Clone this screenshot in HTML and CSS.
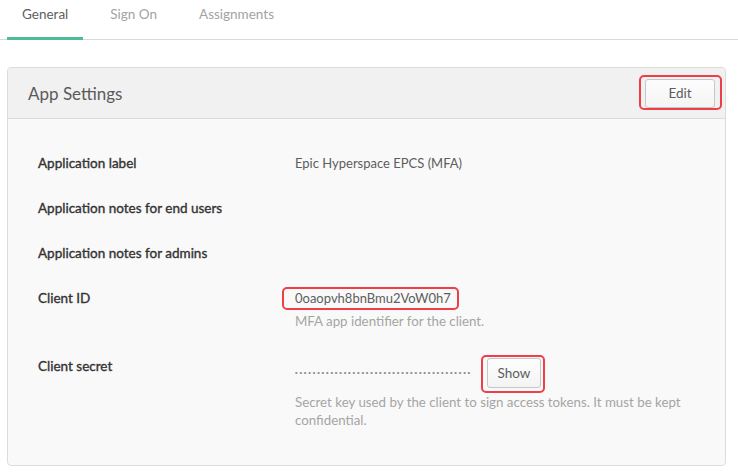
FILE: index.html
```html
<!DOCTYPE html>
<html>
<head>
<meta charset="utf-8">
<link rel="stylesheet" href="styles.css">
</head>
<body>
<nav class="tabs">
  <a class="tab active">General</a>
  <a class="tab">Sign On</a>
  <a class="tab">Assignments</a>
</nav>
<section class="panel">
  <header class="panel-head">
    <h2 class="panel-title">App Settings</h2>
    <button class="btn mark mark-edit">Edit</button>
  </header>
  <div class="panel-body">
    <div class="row">
      <div class="label">Application label</div>
      <div class="value">Epic Hyperspace EPCS (MFA)</div>
    </div>
    <div class="row">
      <div class="label">Application notes for end users</div>
      <div class="value"></div>
    </div>
    <div class="row">
      <div class="label">Application notes for admins</div>
      <div class="value"></div>
    </div>
    <div class="row">
      <div class="label">Client ID</div>
      <div class="value">
        <span class="mark mark-id">0oaopvh8bnBmu2VoW0h7</span>
        <p class="help">MFA app identifier for the client.</p>
      </div>
    </div>
    <div class="row">
      <div class="label">Client secret</div>
      <div class="value">
        <div class="secret-line">
          <span class="dots">••••••••••••••••••••••••••••••••••••••••</span>
          <button class="btn btn-show mark mark-show">Show</button>
        </div>
        <p class="help">Secret key used by the client to sign access tokens. It must be kept confidential.</p>
      </div>
    </div>
  </div>
</section>
</body>
</html>
```

FILE: styles.css
```css
* { box-sizing: border-box; }
body {
  margin: 0;
  background: #fff;
  font-family: Lato, "Liberation Sans", Arial, sans-serif;
  font-size: 14px;
  color: #5d5d5d;
}
.tabs {
  display: flex;
  gap: 12px;
  padding-left: 7px;
  border-bottom: 1px solid #d9d9d9;
  height: 40px;
}
.tab {
  padding: 6px 15px 0;
  height: 40px;
  color: #a3a3a3;
  font-size: 13.5px;
  border-bottom: 3px solid transparent;
}
.tab.active {
  color: #5e5e5e;
  border-bottom-color: #4cbb97;
  margin-bottom: -1px;
}
.panel {
  margin: 27px 12px 0 7px;
  border: 1px solid #dcdcdc;
  border-radius: 4px;
  background: #f9f9f9;
}
.panel-head {
  display: flex;
  align-items: center;
  justify-content: space-between;
  height: 51px;
  padding: 0 10px 0 20px;
  background: #f1f1f1;
  border-bottom: 1px solid #dcdcdc;
  border-radius: 4px 4px 0 0;
}
.panel-title {
  margin: 0;
  font-size: 17px;
  font-weight: normal;
  color: #5a5a5a;
}
.btn {
  font-family: inherit;
  font-size: 13.5px;
  color: #5d5d5d;
  background: linear-gradient(#fdfdfd, #f4f4f4);
  border: 1px solid #c6c6c6;
  border-radius: 3px;
  height: 29px;
  width: 70px;
  padding: 0;
}
.panel-body {
  padding: 35px 30px 36px 30px;
  display: flex;
  flex-direction: column;
  gap: 27px;
}
.row {
  display: grid;
  grid-template-columns: 257px 1fr;
  line-height: 18px;
}
.label {
  color: #333;
  font-size: 13.5px;
  -webkit-text-stroke: 0.35px #333;
}
.value {
  color: #5d5d5d;
  font-size: 13px;
  min-height: 18px;
}
.help {
  margin: 5px 0 0;
  color: #a5a5a5;
  font-size: 13.3px;
}
.secret-line {
  display: flex;
  align-items: center;
  gap: 15px;
  margin-top: 1px;
}
.dots {
  font-family: "Liberation Sans", Arial, sans-serif;
  font-size: 7.5px;
  letter-spacing: 1.8px;
  color: #888;
}
.btn-show {
  width: 54px;
  height: 30px;
}
.mark { position: relative; }
.mark::before {
  content: "";
  position: absolute;
  border: 2px solid #ee3f48;
  border-radius: 5px;
  pointer-events: none;
}
.mark-edit::before { inset: -5px -8px -3px -7px; }
.mark-id::before { inset: -3px -8px -4px -13px; }
.mark-show::before { inset: -4px -5px -6px -7px; }
```
